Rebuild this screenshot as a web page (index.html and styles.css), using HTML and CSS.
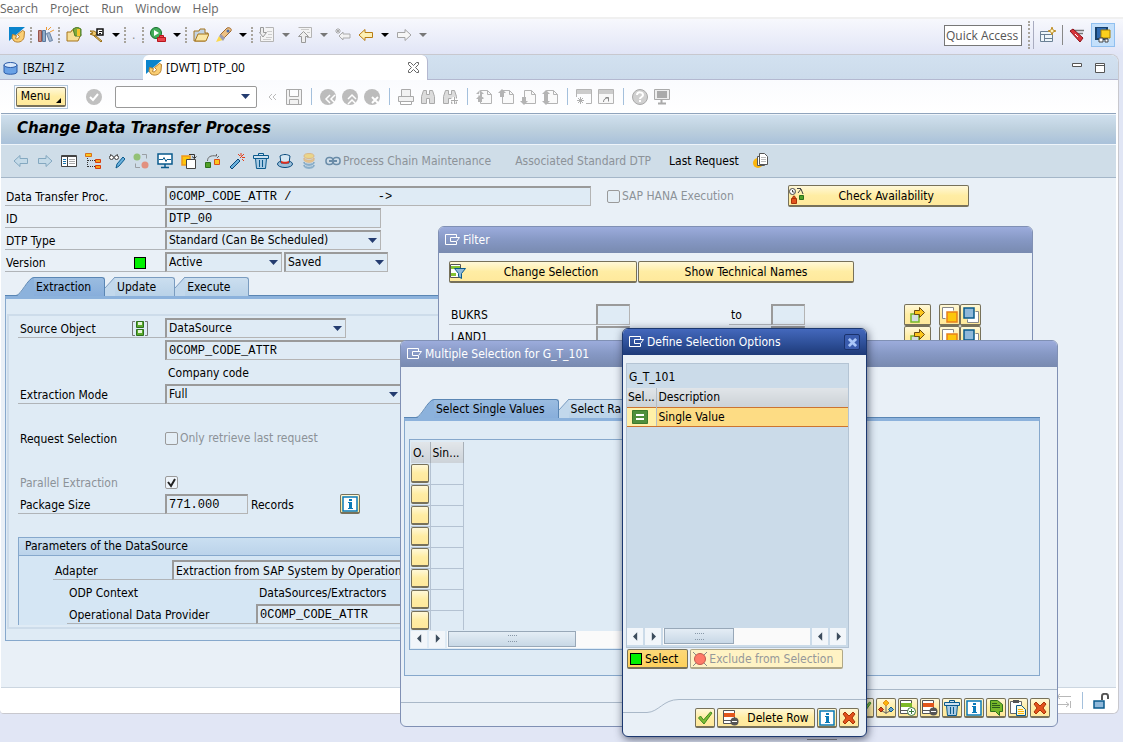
FILE: index.html
```html
<!DOCTYPE html>
<html lang="en">
<head>
  <meta charset="UTF-8">
  <meta name="viewport" content="width=device-width, initial-scale=1.0">
  <title>Change Data Transfer Process</title>
  <link rel="stylesheet" href="styles.css">
</head>
<body>
  <!-- Shared icons -->
  <svg class="sprite" aria-hidden="true">
    <symbol id="i-logo" viewBox="0 0 16 16"><path d="M0 0h16L0 14z" fill="#0a84cc"/><path d="M3.500 7.500l4 1-1 3c2 1 3 0 4-2l-2-2 5-4 2 1-.5 6c-1 4-6 6-10 3.500l-2-3z" fill="#fbcf74" stroke="#b8802c"/></symbol>
    <symbol id="i-window" viewBox="0 0 16 12"><path d="M11.500 3V.5H.5v10h11V8M5.500 3.500h9l-3 4h-6z" fill="none" stroke="currentColor"/></symbol>
    <symbol id="i-folder" viewBox="0 0 16 16"><path d="M1 14V4h5l1-2h5v4h3l-3 8z" fill="#c4d4e4" stroke="#a5741c"/><path d="M2 14l3-7h11l-3 7z" fill="#fbe7a6" stroke="#a5741c"/></symbol>
    <symbol id="i-caret" viewBox="0 0 8 16"><path d="M0 6h8L4 10z" fill="currentColor"/></symbol>
    <symbol id="i-left" viewBox="0 0 16 16"><path d="M1 8l6-5.500v3h7.500v5H7v3z" fill="var(--fill)" stroke="currentColor"/></symbol>
    <symbol id="i-right" viewBox="0 0 16 16"><path d="M15 8L9 2.500v3H1.500v5H9v3z" fill="var(--fill)" stroke="currentColor"/></symbol>
    <symbol id="i-trash" viewBox="0 0 16 16"><path d="M2.500 5.500h11l-1 10h-9z" fill="#a9cbe4" stroke="#0a5a8c"/><path d="M6.500 7v7M9.500 7v7" stroke="#0a5a8c"/><path d="M.5 2.500h15v3H.5zM5.500 2.500v-2h5v2" fill="#cfe2f0" stroke="#0a5a8c"/></symbol>
    <symbol id="i-info" viewBox="0 0 16 16"><path d="M1 1h14v14H1z" fill="#fff" stroke="#0a7ab8" stroke-width="1.500"/><path d="M7 3h3v2H7zM6 6h4v6h1v1H6v-1h1V7H6z" fill="#0a7ab8"/></symbol>
    <symbol id="i-cross" viewBox="0 0 16 16"><path d="M2 4l2-2 4 4 4-4 2 2-3 4 3 4-2 2-4-4-4 4-2-2 3-4z" fill="#e2521c" stroke="#a83408"/></symbol>
    <symbol id="i-check" viewBox="0 0 16 16"><path d="M1.500 8l2-2 3 4 7-8 1.500 1-8 11z" fill="#7dbb35" stroke="#3d8a1f"/></symbol>
    <symbol id="i-addrow" viewBox="0 0 16 16"><path d="M.5.5h11v13H.5z" fill="#fff" stroke="#555"/><path d="M1 3h11v4H1z" fill="#7db928"/><path d="M1 10.500h9" stroke="#555"/><circle cx="11.500" cy="11.500" r="4" fill="#fff" stroke="#3c7a3c"/><path d="M9 11.500h5M11.500 9v5" stroke="#3c7a3c"/></symbol>
    <symbol id="i-delrow" viewBox="0 0 16 16"><path d="M.5.5h11v13H.5z" fill="#fff" stroke="#555"/><path d="M1 3h11v4H1z" fill="#e2571c"/><path d="M1 10.500h9" stroke="#555"/><circle cx="11.500" cy="11.500" r="4" fill="#555"/><path d="M9 11.500h5" stroke="#fff"/></symbol>
    <symbol id="i-arrow" viewBox="0 0 16 16"><path d="M1 7h8v8H1z" fill="#d5dde0" stroke="#76b82a" stroke-width="1.500"/><path d="M4.500 3.500h5v-3l5 5-5 5v-3h-5z" fill="#fbc51c" stroke="#6c4c14"/></symbol>
    <symbol id="i-copyin" viewBox="0 0 16 16"><path d="M11.500 3.500v-3H.5v11h3" fill="#fff" stroke="#888"/><path d="M5 5h10v10H5z" fill="#fdc60c" stroke="#e8801c" stroke-width="1.500"/></symbol>
    <symbol id="i-copyout" viewBox="0 0 16 16"><path d="M12.500 4.500h3v11h-11v-3" fill="#fff" stroke="#888"/><path d="M1 1h10v10H1z" fill="#8fb8da" stroke="#0a5a8c" stroke-width="1.500"/></symbol>
    <symbol id="i-page" viewBox="0 0 16 16"><path d="M4.500 1.500h7l4 4v9h-11z" fill="#fafafa" stroke="#b4b4b4"/><path d="M11.500 1.500v4h4" fill="none" stroke="#b4b4b4"/></symbol>
    <symbol id="i-bin" viewBox="0 0 16 16"><path d="M1.500 7.500l2-6h3v4h3v-4h3l2 6v7h-5v-5h-3v5h-5z" fill="#dcdcdc" stroke="#aaa"/></symbol>
  </svg>

  <nav class="menubar">
    <a href="#">Search</a><a href="#">Project</a><a href="#">Run</a><a href="#">Window</a><a href="#">Help</a>
  </nav>

  <header class="toolbar">
    <div class="tools first"><svg class="icon"><use href="#i-logo"/></svg></div>
    <div class="tools"><svg class="icon" viewBox="0 0 16 16"><path d="M.5 3.500h3v11h-3z" fill="#c48a80" stroke="#98544c"/><path d="M4.500 3.500h3v11h-3z" fill="#8fabc8" stroke="#58779c"/><path d="M8.500 6.500l3-1 3 8-3 1z" fill="#a3b8d0" stroke="#6882a4"/><path d="M10 3l3-3M12 5l4-2M8.500 3V0" stroke="#ec9a34"/></svg></div>
    <div class="tools">
      <svg class="icon" viewBox="0 0 16 16"><path d="M1 14V5h4l1-2h4v4h5l-3 7z" fill="#f7df98" stroke="#a5741c"/><path d="M7 2l4-2 4 2v7H9z" fill="#7ea83a" stroke="#4d7a26"/><path d="M11 2h3v7h-3z" fill="#f5c42c"/></svg>
      <svg class="icon" viewBox="0 0 16 16"><path d="M1 4h4l3 2-2 3-5-2 3-1zM7 9l6 5-1 1-7-6z" fill="#f0c86c" stroke="#99701c"/><path d="M8 2h6v6H8z" fill="#fff" stroke="#111" stroke-width="1.500"/><path d="M10 4.500h3M10 6.500h2" stroke="#111"/></svg>
      <svg class="caret"><use href="#i-caret"/></svg>
    </div>
    <div class="tools"><span class="dot">.</span></div>
    <div class="tools">
      <svg class="icon" viewBox="0 0 16 16"><circle cx="6" cy="6" r="5.500" fill="#43ac5a" stroke="#16702c"/><path d="M4 3l5 3-5 3z" fill="#fff"/><path d="M7.500 10.500h8v4h-8zM9.500 10.500v-2h4v2" fill="#e8444c" stroke="#b8141c"/></svg>
      <svg class="caret"><use href="#i-caret"/></svg>
    </div>
    <div class="tools">
      <svg class="icon"><use href="#i-folder"/></svg>
      <svg class="icon" viewBox="0 0 16 16"><path d="M0 15l3-6 4 4z" fill="#fcd94c"/><path d="M4 8l7-7c3-1 5 1 4 3l-7 7z" fill="#edc184" stroke="#a06a30"/><circle cx="12" cy="4" r="1.500" fill="#4e6da8"/><path d="M3 9l2-2 4 4-2 3z" fill="#9c9cb0"/></svg>
      <svg class="caret"><use href="#i-caret"/></svg>
    </div>
    <div class="tools grey">
      <svg class="icon" viewBox="0 0 16 16"><path d="M6.500.5h8v14H1.500V9" fill="#f4f4f4" stroke="#b4b4b4"/><path d="M1.500.5h3v5h3L4 10 .5 5.500h1z" fill="#eee" stroke="#999"/><path d="M8 4.500h5M9 7.500h4M7 10.500h6M4 12.500h8" stroke="#ccc"/></svg>
      <svg class="caret"><use href="#i-caret"/></svg>
      <svg class="icon" viewBox="0 0 16 16"><path d="M1.500.5h13v10H10" fill="#f4f4f4" stroke="#b4b4b4"/><path d="M4.500 15.500v-6h-3l5-5 5 5h-3v6z" fill="#eee" stroke="#999"/><path d="M4 2.500h8M10 5.500h3" stroke="#ccc"/></svg>
      <svg class="caret"><use href="#i-caret"/></svg>
      <svg class="icon" viewBox="0 0 16 16"><path d="M4 9l4-4v2h7v4H8v2z" fill="#f2f2f2" stroke="#aaa"/><path d="M3 1v6M0 4h6M1 2l4 4M5 2L1 6" stroke="#aaa"/></svg>
      <svg class="icon arrow-gold"><use href="#i-left"/></svg>
      <svg class="caret black"><use href="#i-caret"/></svg>
      <svg class="icon arrow-grey"><use href="#i-right"/></svg>
      <svg class="caret"><use href="#i-caret"/></svg>
    </div>
    <div class="perspectives">
      <input class="quick" type="text" aria-label="Quick Access" value="Quick Access">
      <span class="grip"></span>
      <svg class="icon" viewBox="0 0 16 16"><path d="M.5 4.500h12v10H.5zM.5 7.500h12M4.500 7.500v7M4.500 11.500h8" fill="#eef6fb" stroke="#6a8094"/><path d="M12 0l1 3 3 1-3 1-1 3-1-3-3-1 3-1z" fill="#fff4c0" stroke="#c0902c"/></svg>
      <span class="bar"></span>
      <svg class="icon" viewBox="0 0 16 16"><path d="M3 3.500h12M5 6.500h9" stroke="#777" stroke-width="1.500"/><path d="M1 4l3-2 10 9-3 4z" fill="#d8343c" stroke="#8c1018"/><path d="M6 7l3 3" stroke="#fff"/></svg>
      <button class="active-persp" aria-label="SAP GUI"><svg class="icon" viewBox="0 0 16 16"><path d="M1 0h11v12H1z" fill="#2c68b0" stroke="#16406c" stroke-width="2"/><path d="M6 3h9v8H6z" fill="#fcd01c" stroke="#a88008"/><path d="M4 11h4v4H4zM10 12h3v3h-3z" fill="#fff" stroke="#444"/></svg></button>
    </div>
  </header>

  <main class="editor">
    <div class="editor-tabs">
      <button class="etab"><svg class="icon" viewBox="0 0 16 16"><path d="M1 5v7c0 3 13 3 13 0V5z" fill="#6aa2e6" stroke="#2c5ca8"/><ellipse cx="7.500" cy="5" rx="6.500" ry="2.500" fill="#d8e8fb" stroke="#2c5ca8"/></svg>[BZH] Z</button>
      <button class="etab current"><svg class="icon"><use href="#i-logo"/></svg>[DWT] DTP_00
        <svg class="close" viewBox="0 0 11 11"><path d="M.5.5h2l3 3 3-3h2v2l-3 3 3 3v2h-2l-3-3-3 3h-2v-2l3-3-3-3z" fill="#fff" stroke="#666"/></svg></button>
      <svg class="winctl" viewBox="0 0 36 12"><path d="M1.500 1.500h9v3h-9zM24.500 1.500h9v9h-9zM24.500 3.500h9" fill="#fff" stroke="#555"/></svg>
    </div>

    <div class="sysbar">
      <span class="menu-frame"><button class="sap-btn menu-btn">Menu<svg class="corner" viewBox="0 0 5 5"><path d="M5 0v5H0z"/></svg></button></span>
      <svg class="icon ok" viewBox="0 0 16 16"><circle cx="8" cy="8" r="8" fill="#c0c0c0"/><path d="M4 8l3 3 5-6" fill="none" stroke="#fff" stroke-width="2"/></svg>
      <select class="command" aria-label="Command"><option></option></select>
      <svg class="chev" viewBox="0 0 10 16"><path d="M5 5L2 8l3 3M9 5L6 8l3 3" fill="none" stroke="#bbb"/></svg>
      <svg class="icon" viewBox="0 0 16 16"><path d="M.5.5h15v15H.5zM3.500.5v7h9v-7M3.500 15.500v-5h9v5" fill="#f2f2f2" stroke="#a8a8a8"/></svg>
      <span class="sep"></span>
      <svg class="icon" viewBox="0 0 16 16"><circle cx="8" cy="8" r="8" fill="#bcbcbc"/><path d="M10 6l-4 4 4 4M15 6l-4 4 4 4" fill="none" stroke="#fff" stroke-width="1.500"/></svg>
      <svg class="icon" viewBox="0 0 16 16"><circle cx="8" cy="8" r="8" fill="#bcbcbc"/><path d="M6 10l4-4 4 4M6 15l4-4 4 4" fill="none" stroke="#fff" stroke-width="1.500"/></svg>
      <svg class="icon" viewBox="0 0 16 16"><circle cx="8" cy="8" r="8" fill="#bcbcbc"/><path d="M8 8l6 6M14 8l-6 6" stroke="#fff" stroke-width="2"/></svg>
      <span class="sep"></span>
      <svg class="icon" viewBox="0 0 16 16"><path d="M3.500 7V.5h9V7M.5 7.500h15v5H.5z" fill="#f2f2f2" stroke="#aaa"/><path d="M2.500 12.500h11v3h-11z" fill="#fff" stroke="#aaa"/></svg>
      <svg class="icon"><use href="#i-bin"/></svg>
      <svg class="icon" viewBox="0 0 16 16"><use href="#i-bin"/><path d="M12 8v7M9 11h7" stroke="#fff" stroke-width="3"/><path d="M12.500 8v7M9 11.500h7" stroke="#aaa"/></svg>
      <span class="sep"></span>
      <svg class="icon" viewBox="0 0 16 16"><use href="#i-page"/><path d="M4 1l4 4H6v3h2l-4 0zM4 1L0 5h3v3H0l0 0h8L6 9v4H2V9zM4 6l4 4H0z" fill="#b4b4b4"/></svg>
      <svg class="icon" viewBox="0 0 16 16"><use href="#i-page"/><path d="M4 0l4 4H6v4H2V4H0z" fill="#b4b4b4"/></svg>
      <svg class="icon" viewBox="0 0 16 16"><use href="#i-page"/><path d="M4 16l4-4H6V8H2v4H0z" fill="#b4b4b4"/></svg>
      <svg class="icon" viewBox="0 0 16 16"><use href="#i-page"/><path d="M4 16l4-4H6V5h2L4 1 0 5h2v7H0z" fill="#b4b4b4"/></svg>
      <span class="sep"></span>
      <svg class="icon" viewBox="0 0 16 16"><path d="M.5 8V.5h15v14H10" fill="none" stroke="#b4b4b4"/><path d="M1 1h14v4H1z" fill="#ccc"/><path d="M4.500 8v7M1 11.500h7M2 9l5 5M7 9l-5 5" stroke="#b0b0b0"/></svg>
      <svg class="icon" viewBox="0 0 16 16"><path d="M.5.5h15v14H.5z" fill="#f8f8f8" stroke="#b4b4b4"/><path d="M1 1h14v4H1z" fill="#ccc"/><path d="M5.500 13c0-3 2-4 5-4M7.500 8.500h3v4" fill="none" stroke="#888"/></svg>
      <span class="sep"></span>
      <svg class="icon" viewBox="0 0 16 16"><circle cx="8" cy="8" r="7.500" fill="#d0d0d0" stroke="#a8a8a8"/><path d="M5 6c0-4 6-3 6 0 0 2-3 2-3 4M8 11v2" fill="none" stroke="#fff" stroke-width="2"/></svg>
      <svg class="icon" viewBox="0 0 16 16"><path d="M.5.5h15v10H.5z" fill="#eee" stroke="#aaa"/><path d="M3 2h10v7H3z" fill="#aaa"/><path d="M7.500 10v4M4 14.500h8" stroke="#aaa" stroke-width="2"/></svg>
    </div>

    <div class="session">
      <h1 class="title">Change Data Transfer Process</h1>
      <div class="appbar">
        <svg class="icon arrow-blue"><use href="#i-left"/></svg>
        <svg class="icon arrow-blue"><use href="#i-right"/></svg>
        <svg class="icon" viewBox="0 0 16 16"><path d="M.5 2.500h15v11H.5z" fill="#fff" stroke="#444"/><path d="M1 3.500h14M6.500 4v9" stroke="#444"/><path d="M2 6.500h3M2 8.500h3M2 10.500h3" stroke="#1c74ac"/><path d="M8 6.500h6M8 8.500h6M8 10.500h6" stroke="#aaa"/></svg>
        <svg class="icon" viewBox="0 0 16 16"><path d="M.5.5h6v3h-6z" fill="#fbc51c" stroke="#d8701c"/><path d="M2.500 5v9M3 7.500h7M3 13.500h7" stroke="#333" stroke-dasharray="1 1"/><path d="M10.500 6.500h5v3h-5zM10.500 12.500h5v3h-5z" fill="#f7a01c" stroke="#d83c0c"/></svg>
        <svg class="icon" viewBox="0 0 16 16"><path d="M2 1L1 4M8 1l1 3" stroke="#444"/><circle cx="2.500" cy="4.500" r="2" fill="#fff" stroke="#444"/><circle cx="7.500" cy="4.500" r="2" fill="#fff" stroke="#444"/><path d="M7 15l1-4 6-7 2 2-6 7z" fill="#6ab0dc" stroke="#0a5a8c"/></svg>
        <svg class="icon faded" viewBox="0 0 16 16"><circle cx="4" cy="4" r="3.500" fill="#6cb02c"/><circle cx="12" cy="12" r="3.500" fill="#f0603c"/><path d="M9 1.500h4.500v4M7 14.500H2.500v-4" fill="none" stroke="#777"/></svg>
        <svg class="icon" viewBox="0 0 16 16"><path d="M1 1h14v10H1z" fill="#fff" stroke="#0a5a8c" stroke-width="1.500"/><path d="M2 6.500h4l1-2 2 4 1-2h4" fill="none" stroke="#0a5a8c"/><path d="M8 11v3M4 14.500h8" stroke="#0a5a8c" stroke-width="1.500"/></svg>
        <svg class="icon" viewBox="0 0 16 16"><path d="M1 3h8v9H1z" fill="#fdc60c" stroke="#f0981c" stroke-width="1.500"/><path d="M5.500 6.500h9v9h-9z" fill="#fff" stroke="#444"/><path d="M8 1.500h5.500v4M11 3.500l2.500 2 2-2" fill="none" stroke="#333"/></svg>
        <svg class="icon" viewBox="0 0 16 16"><path d="M.5 9.500h5v5h-5z" fill="#50a028" stroke="#2c701c"/><path d="M9.500 6.500h5v5h-5z" fill="#fbc51c" stroke="#d8501c"/><path d="M2.500 8c0-4 3-6 9-5V1M12 5l2-2" fill="none" stroke="#666"/></svg>
        <svg class="icon" viewBox="0 0 16 16"><path d="M1 14l8-8 2 2-8 8z" fill="#6ab0dc" stroke="#0a4a7c"/><path d="M12 0v3M16 4.500h-3M15 1l-4 4M9 1l2 2M15 8l-2-2" stroke="#e2401c"/></svg>
        <svg class="icon"><use href="#i-trash"/></svg>
        <svg class="icon" viewBox="0 0 16 16"><ellipse cx="8" cy="11" rx="7.500" ry="3.500" fill="#9cc0da" stroke="#0a4a7c"/><path d="M4 10L3 3c3-2 7-2 10 0l-1 7z" fill="#d5e6f2" stroke="#0a4a7c"/><path d="M4 8c2 1 6 1 8 0v2c-2 1-6 1-8 0z" fill="#e02c1c"/></svg>
        <svg class="icon faded" viewBox="0 0 16 16"><ellipse cx="8" cy="3" rx="5" ry="2.500" fill="#fcd04c" stroke="#e2a04c"/><path d="M3 5c0 3 10 3 10 0v2c0 3-10 3-10 0z" fill="#fbb54c" stroke="#e2a04c"/><path d="M3 9c0 3 10 3 10 0v1c0 3-10 3-10 0zM3 12c0 3 10 3 10 0v1c0 3-10 3-10 0z" fill="#8ab4d4" stroke="#4c84ac"/></svg>
        <button class="link-btn chain" disabled><svg class="icon" viewBox="0 0 16 16"><rect x="1" y="4.500" width="7" height="7" rx="3" fill="none" stroke="#6a8ca8" stroke-width="1.500"/><rect x="8" y="4.500" width="7" height="7" rx="3" fill="none" stroke="#6a8ca8" stroke-width="1.500"/><path d="M4 8h8" stroke="#6a8ca8" stroke-width="2"/></svg>Process Chain Maintenance</button>
        <button class="link-btn assoc" disabled>Associated Standard DTP</button>
        <button class="link-btn last">Last Request</button>
        <svg class="icon" viewBox="0 0 16 16"><circle cx="5" cy="10" r="5" fill="#fbb50c"/><path d="M4.500 3.500h7v9h-7z" fill="#fff" stroke="#555"/><path d="M6.500.5h5l3 3v8h-8z" fill="#fff" stroke="#555"/><path d="M8 4.500h5M8 6.500h5M8 8.500h5" stroke="#bbb"/></svg>
      </div>

      <div class="screen">
        <div class="row">
          <label class="lbl wide" for="dtp">Data Transfer Proc.</label>
          <input class="field mono w-proc" id="dtp" value="0COMP_CODE_ATTR /            -&gt;" readonly>
          <label class="check hana"><input type="checkbox" disabled>SAP HANA Execution</label>
          <button class="sap-btn availability"><svg class="icon" viewBox="0 0 16 16"><circle cx="3.500" cy="3.500" r="3" fill="#fff" stroke="#444"/><path d="M3.500 2v2h2M8 .5h4M9 5l3-4 2 5" fill="none" stroke="#444"/><path d="M10.500 7.500h4v4h-4z" fill="#50a028" stroke="#2c701c"/><path d="M2.500 10.500h5v5h-5zM3.500 10l1-2h1l1 2" fill="#e2521c" stroke="#a83408"/></svg><span>Check Availability</span></button>
        </div>
        <div class="row">
          <label class="lbl wide" for="dtpid">ID</label>
          <input class="field mono w-id" id="dtpid" value="DTP_00" readonly>
        </div>
        <div class="row">
          <label class="lbl wide" for="dtptype">DTP Type</label>
          <select class="field w-id" id="dtptype"><option>Standard (Can Be Scheduled)</option></select>
        </div>
        <div class="row">
          <label class="lbl wide" for="version">Version <span class="led"></span></label>
          <select class="field w-version" id="version"><option>Active</option></select>
          <select class="field w-state" aria-label="State"><option>Saved</option></select>
        </div>

        <div class="tabs">
          <svg class="slope" viewBox="0 0 18 19"><path d="M0 19C6 18 12 1 18 0V19z" fill="#8cb2dc"/><path d="M0 18.500c5 0 12-18 18-18" fill="none" stroke="#5a86b4"/></svg>
          <button class="tab on">Extraction</button>
          <svg class="slope small" viewBox="0 0 10 19"><path d="M0 11L10 0v19H0z" fill="#c2d8ec"/><path d="M0 11L10 0" stroke="#7a9cc0"/></svg>
          <button class="tab">Update</button>
          <svg class="slope small" viewBox="0 0 10 19"><path d="M0 11L10 0v19H0z" fill="#c2d8ec"/><path d="M0 11L10 0" stroke="#7a9cc0"/></svg>
          <button class="tab">Execute</button>
        </div>
        <section class="panel">
          <div class="group">
            <div class="row">
              <label class="lbl" for="source">Source Object <svg class="icon" viewBox="0 0 16 16"><path d="M3 .5H.5v14H3M13 .5h2.500v14H13" fill="none" stroke="#777"/><path d="M4.500.5h7v6h-7zM4.500 8.500h7v6h-7z" fill="#5aa82c" stroke="#2c701c"/><path d="M6 1h4v3H6zM6 9h4v3H6z" fill="#e4f4d8"/></svg></label>
              <select class="field w-source" id="source"><option>DataSource</option></select>
            </div>
            <div class="row indent"><input class="field mono w-name" aria-label="DataSource name" value="0COMP_CODE_ATTR" readonly></div>
            <div class="row indent"><span class="value">Company code</span></div>
            <div class="row">
              <label class="lbl" for="mode">Extraction Mode</label>
              <select class="field w-mode" id="mode"><option>Full</option></select>
            </div>
            <div class="row"></div>
            <div class="row">
              <span class="lbl plain">Request Selection</span>
              <label class="check"><input type="checkbox" disabled>Only retrieve last request</label>
            </div>
            <div class="row"></div>
            <div class="row">
              <label class="lbl plain dim" for="parallel">Parallel Extraction</label>
              <span class="check"><input type="checkbox" id="parallel" checked></span>
            </div>
            <div class="row">
              <label class="lbl" for="package">Package Size</label>
              <input class="field mono w-package" id="package" value="771.000" readonly>
              <span class="records">Records</span>
              <button class="sap-btn sq" aria-label="Information"><svg class="icon"><use href="#i-info"/></svg></button>
            </div>
            <fieldset class="params">
              <legend>Parameters of the DataSource</legend>
              <div class="row adapter"><label class="lbl" for="adapter">Adapter</label><input class="field w-rest" id="adapter" value="Extraction from SAP System by Operational Data Provisioning" readonly></div>
              <div class="row odp"><span class="lbl plain">ODP Context</span><span class="value">DataSources/Extractors</span></div>
              <div class="row odp"><label class="lbl" for="odp">Operational Data Provider</label><input class="field mono w-rest" id="odp" value="0COMP_CODE_ATTR" readonly></div>
            </fieldset>
          </div>
        </section>
      </div>
      <footer class="status">
        <svg class="icon" viewBox="0 0 16 16"><path d="M.5 0v7M2 3.500h14M5 1L2 3.500 5 6M15.500 8v7M0 11.500h14M11 9l3 2.500-3 2.500" fill="none" stroke="#b8b8b8"/></svg>
        <span class="sep"></span>
        <svg class="icon" viewBox="0 0 16 16"><path d="M1 8h10v7H1z" fill="#8fb8da" stroke="#0a5a8c" stroke-width="1.500"/><path d="M9 7V3c0-3 6-3 6 0v3" fill="none" stroke="#555" stroke-width="2"/></svg>
      </footer>
    </div>
  </main>

  <footer class="workbench-foot"><span class="foot-line"></span></footer>

  <!-- Filter window -->
  <section class="dialog filter">
    <h2 class="dlg-title"><svg class="win-icon"><use href="#i-window"/></svg>Filter</h2>
    <div class="filter-btns">
      <button class="sap-btn change"><svg class="icon" viewBox="0 0 16 16"><path d="M.5.5h10v13H.5z" fill="#fff" stroke="#555"/><path d="M1 2h9v3H1zM1 9h5v3H1z" fill="#86c232"/><path d="M4.500 4.500h11l-4 5v5l-3-2v-3z" fill="#8fb8da" stroke="#0a5a8c"/></svg><span>Change Selection</span></button>
      <button class="sap-btn names">Show Technical Names</button>
    </div>
    <div class="range">
      <label class="lbl" for="bukrs">BUKRS</label><input class="field" id="bukrs">
      <label class="lbl to" for="bukrs2">to</label><input class="field" id="bukrs2">
      <button class="sap-btn multi" aria-label="Multiple selection"><svg class="icon"><use href="#i-arrow"/></svg></button>
      <button class="sap-btn in" aria-label="Include"><svg class="icon"><use href="#i-copyin"/></svg></button>
      <button class="sap-btn" aria-label="Exclude"><svg class="icon"><use href="#i-copyout"/></svg></button>
    </div>
    <div class="range">
      <label class="lbl" for="land">LAND1</label><input class="field" id="land">
      <span class="lbl to"></span><input class="field" aria-label="LAND1 to">
      <button class="sap-btn multi" aria-label="Multiple selection"><svg class="icon"><use href="#i-arrow"/></svg></button>
      <button class="sap-btn in" aria-label="Include"><svg class="icon"><use href="#i-copyin"/></svg></button>
      <button class="sap-btn" aria-label="Exclude"><svg class="icon"><use href="#i-copyout"/></svg></button>
    </div>
  </section>

  <!-- Multiple selection window -->
  <section class="dialog multiple">
    <h2 class="dlg-title"><svg class="win-icon"><use href="#i-window"/></svg>Multiple Selection for G_T_101</h2>
    <div class="multi-body">
      <div class="tabs">
        <svg class="slope" viewBox="0 0 18 19"><path d="M0 19C6 18 12 1 18 0V19z" fill="#8cb2dc"/><path d="M0 18.500c5 0 12-18 18-18" fill="none" stroke="#5a86b4"/></svg>
        <button class="tab on">Select Single Values</button>
        <svg class="slope small" viewBox="0 0 10 19"><path d="M0 11L10 0v19H0z" fill="#c2d8ec"/><path d="M0 11L10 0" stroke="#7a9cc0"/></svg>
        <button class="tab">Select Ra</button>
      </div>
      <div class="panel">
        <div class="grid-frame">
          <table class="values">
            <thead><tr><th>O.</th><th>Sin...</th></tr></thead>
            <tbody>
              <tr><td><button class="sap-btn cell" aria-label="Option 1"></button></td><td></td></tr>
              <tr><td><button class="sap-btn cell" aria-label="Option 2"></button></td><td></td></tr>
              <tr><td><button class="sap-btn cell" aria-label="Option 3"></button></td><td></td></tr>
              <tr><td><button class="sap-btn cell" aria-label="Option 4"></button></td><td></td></tr>
              <tr><td><button class="sap-btn cell" aria-label="Option 5"></button></td><td></td></tr>
              <tr><td><button class="sap-btn cell" aria-label="Option 6"></button></td><td></td></tr>
              <tr><td><button class="sap-btn cell" aria-label="Option 7"></button></td><td></td></tr>
              <tr><td><button class="sap-btn cell" aria-label="Option 8"></button></td><td></td></tr>
            </tbody>
          </table>
          <div class="scroll">
            <button aria-label="Scroll left"><svg viewBox="0 0 6 10"><path d="M5 0v10L0 5z"/></svg></button>
            <button aria-label="Scroll right"><svg viewBox="0 0 6 10"><path d="M1 0v10l5-5z"/></svg></button>
            <span class="track"><span class="thumb long"></span></span>
          </div>
        </div>
      </div>
    </div>
    <div class="edge"><span class="low"></span><svg viewBox="0 0 32 14"><path d="M0 13.500C12 13 16 .5 32 .5" fill="none" stroke="#a9b8c8"/></svg><span class="high"></span></div>
    <div class="dlg-foot">
      <button class="sap-btn sq" aria-label="Copy"><svg class="icon"><use href="#i-check"/></svg></button>
      <button class="sap-btn sq" aria-label="Selection options"><svg class="icon" viewBox="0 0 16 16"><path d="M8 5v9M4 11l4 2 4-2" fill="none" stroke="#666"/><path d="M8 0l3 3-3 3-3-3z" fill="#fbb50c" stroke="#e2901c"/><path d="M3 7l2.500 2.500L3 12 .5 9.500z" fill="#d8441c" stroke="#902c0c"/><path d="M13 7l2.500 2.500L13 12l-2.500-2.500z" fill="#6aa4cc" stroke="#0a5a8c"/></svg></button>
      <button class="sap-btn sq" aria-label="Insert row"><svg class="icon"><use href="#i-addrow"/></svg></button>
      <button class="sap-btn sq" aria-label="Delete row"><svg class="icon"><use href="#i-delrow"/></svg></button>
      <button class="sap-btn sq" aria-label="Delete all"><svg class="icon"><use href="#i-trash"/></svg></button>
      <button class="sap-btn sq" aria-label="Help"><svg class="icon"><use href="#i-info"/></svg></button>
      <button class="sap-btn sq" aria-label="Import from text file"><svg class="icon" viewBox="0 0 16 16"><path d="M2.500.5h7l5 4v7h-3v4l-4-4h-5z" fill="#76b82a" stroke="#2c701c"/><path d="M4 3.500h5M4 5.500h8M4 7.500h8" stroke="#2c5c1c"/></svg></button>
      <button class="sap-btn sq" aria-label="Paste"><svg class="icon" viewBox="0 0 16 16"><path d="M.5 1.500h11v12H.5z" fill="#fff" stroke="#666"/><path d="M3 0h6v3H3z" fill="#555"/><path d="M6.500 5.500h5l4 4v6h-9z" fill="#fff8d0" stroke="#0a5a8c"/><path d="M8 9.500h5M8 11.500h6M8 13.500h6" stroke="#fbb50c"/></svg></button>
      <button class="sap-btn sq" aria-label="Cancel"><svg class="icon"><use href="#i-cross"/></svg></button>
    </div>
  </section>

  <!-- Define selection options window -->
  <section class="dialog define">
    <h2 class="dlg-title"><svg class="win-icon"><use href="#i-window"/></svg>Define Selection Options
      <button class="dlg-close" aria-label="Close"><svg viewBox="0 0 10 10"><path d="M1 1l8 8M9 1L1 9" stroke="#a9c6f8" stroke-width="3"/></svg></button></h2>
    <div class="options">
      <table>
        <caption>G_T_101</caption>
        <thead><tr><th class="sel">Sel...</th><th>Description</th></tr></thead>
        <tbody><tr class="picked"><td class="sel"><svg class="icon" viewBox="0 0 16 14"><path d="M.5.500h15v13H.5z" fill="#4f8f3c" stroke="#3c7a2c"/><path d="M4 4h8v2H4zM4 8h8v2H4z" fill="#fff"/></svg></td><td>Single Value</td></tr></tbody>
      </table>
      <div class="scroll">
        <button aria-label="Scroll left"><svg viewBox="0 0 6 10"><path d="M5 0v10L0 5z"/></svg></button>
        <button aria-label="Scroll right"><svg viewBox="0 0 6 10"><path d="M1 0v10l5-5z"/></svg></button>
        <span class="track"><span class="thumb"></span></span>
        <button aria-label="Page left"><svg viewBox="0 0 6 10"><path d="M5 0v10L0 5z"/></svg></button>
        <button aria-label="Page right"><svg viewBox="0 0 6 10"><path d="M1 0v10l5-5z"/></svg></button>
      </div>
    </div>
    <div class="choice">
      <button class="sap-btn chosen"><span class="led"></span>Select</button>
      <button class="sap-btn exclude" disabled><svg class="icon" viewBox="0 0 16 16"><path d="M1 1l14 14M15 1L1 15" stroke="#888"/><circle cx="8" cy="8" r="5.500" fill="#ff7a68" stroke="#c05a4c"/></svg>Exclude from Selection</button>
    </div>
    <div class="edge"><span class="low"></span><svg viewBox="0 0 32 14"><path d="M0 13.500C12 13 16 .5 32 .5" fill="none" stroke="#a9b8c8"/></svg><span class="high"></span></div>
    <div class="dlg-foot">
      <button class="sap-btn sq" aria-label="Continue"><svg class="icon"><use href="#i-check"/></svg></button>
      <button class="sap-btn delete"><svg class="icon"><use href="#i-delrow"/></svg>Delete Row</button>
      <button class="sap-btn sq" aria-label="Help"><svg class="icon"><use href="#i-info"/></svg></button>
      <button class="sap-btn sq" aria-label="Cancel"><svg class="icon"><use href="#i-cross"/></svg></button>
    </div>
  </section>
</body>
</html>
```
FILE: styles.css
```css
* {
  box-sizing: border-box;
}

body {
  margin: 0;
  min-height: 100vh;
  display: flex;
  flex-direction: column;
  position: relative;
  overflow: hidden;
  background: #e1e6f5;
  color: #000;
  font-family: "DejaVu Sans Condensed", "DejaVu Sans", sans-serif;
  font-size: 12px;
  line-height: 16px;
}

button,
input,
select {
  font: inherit;
  color: inherit;
  margin: 0;
}

button {
  padding: 0;
  border: 0;
  background: none;
}

.sprite {
  position: absolute;
  width: 0;
  height: 0;
}

.icon {
  width: 16px;
  height: 16px;
  flex: none;
}

/* Workbench menu and toolbar */
.menubar {
  display: flex;
  gap: 12px;
  height: 19px;
  padding-top: 1px;
  background: #fff;
  border-bottom: 2px solid #f0f0f0;
  font-family: "Open Sans", sans-serif;
}

.menubar a {
  color: #666;
  text-decoration: none;
}

.toolbar {
  display: flex;
  align-items: center;
  height: 35px;
  padding: 0 0 3px 9px;
  background: linear-gradient(#f7f8fd, #e1e5f6);
}

.tools {
  display: flex;
  align-items: center;
  gap: 7px;
  padding: 0 4px 0 6px;
  border-left: 2px dotted #a8a49c;
}

.tools.first {
  padding: 0 5px 0 0;
  border: 0;
}

.dot {
  width: 6px;
  color: #888;
}

.caret {
  width: 8px;
  height: 16px;
}

.grey .caret {
  color: #777;
}

.grey .caret.black {
  color: #000;
}

.arrow-gold {
  color: #b87c14;
  --fill: #fdf0b4;
}

.arrow-grey {
  color: #a4a4a4;
  --fill: #f6f6f6;
}

.arrow-blue {
  color: #84a8c0;
  --fill: #c4dae8;
}

.perspectives {
  display: flex;
  align-items: center;
  gap: 6px;
  margin-left: auto;
  padding-right: 8px;
}

.quick {
  width: 78px;
  height: 21px;
  padding: 0 1px;
  border: 1px solid #777;
  background: #fff;
  color: #555;
  font-family: "Open Sans", sans-serif;
}

.grip {
  width: 6px;
  height: 28px;
  border-left: 2px dotted #a8a49c;
  border-right: 1px solid #a9acc0;
}

.bar {
  height: 20px;
  border-left: 1px solid #888;
}

.active-persp {
  display: flex;
  padding: 3px;
  border: 1px solid #90c0f0;
  background: #c4e0fb;
}

/* Editor area */
.editor {
  flex: 1;
  display: flex;
  flex-direction: column;
  margin-right: 4px;
  border: 1px solid #c8c8ce;
  border-left: 0;
  border-radius: 0 8px 6px 4px;
  background: #fff;
  overflow: hidden;
}

.editor-tabs {
  display: flex;
  height: 25px;
  background: linear-gradient(#d2e1f0, #ccdbeb);
  border-bottom: 1px solid #b4b8d0;
  font-family: "Open Sans", sans-serif;
}

.etab {
  display: flex;
  align-items: center;
  gap: 4px;
  width: 143px;
  height: 25px;
  padding: 0 3px;
}

.etab.current {
  width: 285px;
  padding-right: 8px;
  background: #fff;
  border-right: 1px solid #b4b8d0;
  border-radius: 6px 6px 0 0;
}

.etab .close {
  width: 11px;
  height: 11px;
  margin-left: auto;
}

.winctl {
  width: 36px;
  height: 12px;
  margin: 7px 11px 0 auto;
}

.sysbar {
  display: flex;
  align-items: center;
  gap: 6px;
  height: 33px;
  padding-left: 14px;
  background: linear-gradient(#fafbfe, #fff);
}

.menu-frame {
  padding: 1px;
  border: 1px solid #b4c8dc;
}

.sap-btn {
  display: flex;
  align-items: center;
  justify-content: center;
  height: 22px;
  border: 1px solid #77715a;
  border-bottom-width: 2px;
  border-radius: 2px;
  background: linear-gradient(#fff8d8, #ffeda4 50%, #ffe99c);
}

.sap-btn > span:not(.led) {
  flex: 1;
  text-align: center;
}

.sap-btn.sq {
  width: 20px;
  height: 20px;
}

.sap-btn.menu-btn {
  width: 50px;
  height: 20px;
  gap: 6px;
}

.corner {
  width: 5px;
  height: 5px;
  margin-top: 8px;
}

.ok {
  margin: 0 7px 0 12px;
}

.command {
  width: 142px;
  height: 22px;
  margin-right: 4px;
}

.chev {
  width: 10px;
  height: 16px;
  margin-right: 3px;
}

.sep {
  width: 1px;
  height: 17px;
  margin: 0 2px 0 3px;
  background: #a4c0dc;
}

/* SAP session */
.session {
  flex: 1;
  display: flex;
  flex-direction: column;
  margin: 0 2px 0 1px;
  border-top: 1px solid #90a4bc;
}

.title {
  margin: 0;
  height: 31px;
  padding-left: 16px;
  border: 1px solid #eef4fa;
  border-width: 1px 0;
  background: linear-gradient(#d0e0ee, #bdd0de 50%, #a9c1da);
  font-family: "DejaVu Sans", sans-serif;
  font-size: 15px;
  font-style: italic;
  line-height: 27px;
}

.appbar {
  display: flex;
  align-items: center;
  gap: 8px;
  height: 33px;
  padding-left: 12px;
  border-bottom: 1px solid #a4b6c8;
  background: #cfdde8;
}

.faded {
  opacity: 0.6;
}

.link-btn {
  display: flex;
  align-items: center;
  gap: 2px;
}

.link-btn:disabled {
  color: #8c9298;
}

.assoc {
  margin-left: 16px;
}

.last {
  margin: 0 6px 0 10px;
}

.screen {
  flex: 1;
  padding: 7px 90px 0 4px;
  background: #e9f0f7;
}

.row {
  display: flex;
  align-items: center;
  gap: 2px;
  height: 22px;
}

.lbl {
  display: flex;
  align-items: center;
  justify-content: space-between;
  flex: none;
  width: 147px;
  height: 20px;
  margin-right: -2px;
  padding: 2px 17px 0 2px;
  border-bottom: 1px solid #b0b4b8;
  white-space: nowrap;
}

.lbl.wide {
  width: 160px;
  padding: 2px 17px 0 1px;
}

.lbl.plain {
  border-color: transparent;
}

.dim {
  color: #8c9298;
}

.field,
.command {
  appearance: none;
  flex: none;
  border: 1px solid #b4b4b4;
  border-top: 2px solid #9a9a9a;
  border-left: 2px solid #9a9a9a;
  border-radius: 0;
  background-color: #dfebf5;
}

.field {
  height: 20px;
  padding: 0 2px;
}

.command {
  border: 1px solid #999;
  border-radius: 2px;
  background-color: #fff;
}

select.field,
.command {
  background-image: url('data:image/svg+xml,<svg xmlns="http://www.w3.org/2000/svg" width="9" height="5"><path d="M0 0h9L4.500 5z" fill="%23243c70"/></svg>');
  background-repeat: no-repeat;
  background-position: right 3px center;
}

select.field {
  padding-bottom: 2px;
}

.command {
  background-position: right 6px center;
}

.mono {
  font-family: "Liberation Mono", monospace;
  white-space: pre;
}

.w-proc {
  width: 426px;
}

.w-id {
  width: 216px;
}

.w-version {
  width: 117px;
}

.w-state {
  width: 104px;
}

.w-source {
  width: 181px;
}

.w-name {
  width: 400px;
}

.w-mode {
  width: 237px;
}

.w-package {
  width: 83px;
}

.w-rest {
  flex: 1;
}

.check {
  display: flex;
  align-items: center;
  gap: 2px;
  color: #8c9298;
}

.check input {
  appearance: none;
  width: 13px;
  height: 13px;
  border: 1px solid #9a9a9a;
  border-radius: 2px;
  background: #e4eef6;
}

.check input:checked {
  background: #eef4fa url('data:image/svg+xml,<svg xmlns="http://www.w3.org/2000/svg" width="11" height="11"><path d="M2 5l3 4 4-7" fill="none" stroke="%23222" stroke-width="2"/></svg>');
}

.hana {
  margin-left: 14px;
}

.availability {
  width: 181px;
  margin-left: 52px;
}

.led {
  flex: none;
  width: 12px;
  height: 12px;
  margin-right: 2px;
  border: 1px solid #000;
  background: #00f000;
}

.tabs {
  display: flex;
  height: 20px;
  margin-top: 3px;
  padding-left: 12px;
}

.screen .tabs {
  padding-left: 11px;
}

.slope {
  width: 18px;
  height: 19px;
  margin-top: 1px;
}

.slope.small {
  width: 10px;
}

.tab {
  height: 19px;
  margin-top: 1px;
  padding: 0 18px 0 2px;
  border: 1px solid #7a9cc0;
  border-width: 1px 1px 0 0;
  border-radius: 0 3px 0 0;
  background: linear-gradient(#cbdeef, #b9d2e8);
}

.tab.on {
  padding-right: 13px;
  border-color: #5a86b4;
  background: linear-gradient(#9abce0, #88aedb);
}

.panel {
  padding: 15px 2px 11px 1px;
  border: 1px solid #86a8cc;
  border-top: 3px solid #8cb2dc;
  background: #dfebf5;
  box-shadow: 0 -1px #5a86b4;
}

.group {
  padding: 1px 0 2px 9px;
  border: 2px solid #cddcea;
}

.indent {
  padding-left: 147px;
}

.value {
  padding: 2px 0 0 3px;
}

.records {
  width: 88px;
  padding: 1px 0 0 1px;
}

.params {
  margin: 22px 0 0;
  padding: 3px 0 0;
  border: 1px solid #86a8cc;
  border-width: 1px 0 0 1px;
  background: #d5e6f4;
}

.params legend {
  float: left;
  width: 100%;
  height: 18px;
  margin: -3px 0 3px;
  padding: 0 6px;
  border-bottom: 1px solid #86a8cc;
  background: linear-gradient(#cadff1, #bbd3ea);
}

.params .row {
  clear: both;
}

.adapter {
  padding-left: 34px;
}

.adapter .lbl {
  width: 119px;
}

.odp {
  padding-left: 48px;
}

.odp .lbl {
  width: 189px;
}

.status {
  display: flex;
  justify-content: flex-end;
  align-items: center;
  gap: 8px;
  height: 26px;
  padding-right: 7px;
  border-top: 1px solid #ccd6e0;
  background: #fff;
}

.workbench-foot {
  display: flex;
  align-items: flex-end;
  justify-content: center;
  height: 28px;
  padding: 0 0 2px 521px;
}

.foot-line {
  width: 30px;
  border-bottom: 1px solid #888;
}

/* Floating windows */
.dialog {
  position: absolute;
  display: flex;
  flex-direction: column;
  border: 1px solid #8090b4;
  border-radius: 6px;
  background: #e9f0f7;
}

.dlg-title {
  display: flex;
  align-items: center;
  gap: 2px;
  flex: none;
  height: 26px;
  margin: 0;
  padding: 0 6px;
  border-radius: 5px 5px 0 0;
  background: linear-gradient(#9cacdc, #8698c4 50%, #788ab0);
  color: #fff;
  font-size: 12px;
  font-weight: normal;
}

.win-icon {
  width: 16px;
  height: 12px;
}

.filter {
  top: 226px;
  left: 438px;
  width: 595px;
  height: 300px;
}

.filter-btns {
  display: flex;
  gap: 1px;
  padding: 8px 0 21px 10px;
}

.change {
  width: 188px;
}

.names {
  width: 216px;
}

.range {
  display: flex;
  height: 22px;
  padding-left: 10px;
}

.range .lbl {
  margin: 0;
  height: 21px;
}

.range .field {
  width: 34px;
  height: 21px;
}

.range .to {
  width: 42px;
  margin-left: 99px;
}

.range .sap-btn {
  width: 21px;
}

.range .multi {
  width: 27px;
  margin-left: 99px;
}

.range .in {
  margin-left: 8px;
}

.multiple {
  top: 340px;
  left: 400px;
  width: 658px;
  height: 387px;
}

.multi-body {
  flex: 1;
  padding: 28px 17px 0 3px;
}

.multi-body .panel {
  height: 258px;
  padding: 18px 180px 0 4px;
}

.grid-frame {
  border: 1px solid #86a8cc;
  padding: 2px 1px 1px;
}

.values {
  border-collapse: collapse;
  table-layout: fixed;
  width: 53px;
}

.values th {
  height: 21px;
  padding: 0 2px;
  border-right: 1px solid #a8b0b8;
  background: linear-gradient(#e2e6ea, #ccd2d8);
  font-weight: normal;
  text-align: left;
}

.values th:first-child {
  width: 19px;
}

.values td {
  height: 21px;
  padding: 0;
  border-right: 1px solid #b4c2d2;
  border-bottom: 1px solid #b4c2d2;
}

.values tr:last-child td {
  height: 19px;
  border-bottom: 0;
}

.cell {
  width: 18px;
  height: 19px;
}

.scroll {
  display: flex;
  gap: 2px;
  height: 17px;
  margin-top: 1px;
}

.scroll button {
  width: 16px;
  background: #f2f6fa;
}

.scroll button svg {
  width: 5px;
  height: 9px;
  fill: #3c4c5c;
}

.track {
  flex: 1;
  background: #fafafa;
}

.thumb {
  display: flex;
  justify-content: center;
  align-items: center;
  width: 70px;
  height: 16px;
  margin-left: 1px;
  border: 1px solid #98a8b8;
  background: linear-gradient(#e4edf5, #c8d8e6);
}

.thumb::after {
  content: "";
  width: 9px;
  height: 5px;
  border: 1px dotted #8898a8;
  border-width: 1px 0;
}

.thumb.long {
  width: 128px;
}

.edge {
  display: flex;
  height: 14px;
}

.edge svg {
  width: 32px;
  height: 14px;
}

.low {
  width: 24px;
  border-bottom: 1px solid #a9b8c8;
}

.multiple .low {
  width: 230px;
}

.high {
  flex: 1;
  border-top: 1px solid #a9b8c8;
}

.dlg-foot {
  display: flex;
  justify-content: flex-end;
  gap: 2px;
  margin-top: -5px;
  padding: 0 7px 8px;
}

.define {
  top: 328px;
  left: 622px;
  width: 245px;
  height: 409px;
  border-color: #1c3870;
  box-shadow: 1px 2px 8px rgba(30, 36, 60, 0.7);
}

.define .dlg-title {
  background: linear-gradient(#4468bc, #30529c 50%, #1e3a78);
}

.dlg-close {
  display: flex;
  align-items: center;
  justify-content: center;
  width: 16px;
  height: 16px;
  margin-left: auto;
  border: 1px solid #1a326c;
  border-radius: 2px;
  background: #3a5cae;
}

.dlg-close svg {
  width: 9px;
  height: 9px;
}

.options {
  flex: none;
  display: flex;
  flex-direction: column;
  justify-content: space-between;
  height: 285px;
  margin: 8px 17px 0 3px;
  border: 1px solid #b4c4d4;
  background: #cbdbe9;
}

.options table {
  width: 100%;
  border-collapse: collapse;
  table-layout: fixed;
}

.options caption {
  height: 24px;
  padding: 5px 2px 0;
  text-align: left;
}

.options th,
.options td {
  height: 19px;
  padding: 0 2px;
  font-weight: normal;
  text-align: left;
  line-height: 16px;
}

.options th {
  background: linear-gradient(#e0e4e8, #ccd2d6);
}

.options .sel {
  width: 29px;
  padding: 0 0 0 1px;
  border-right: 1px solid #b4bcc4;
}

.picked td {
  border: 1px solid #cc7430;
  border-width: 1px 0;
  background: #fddc84;
}

.options .picked .sel {
  padding-left: 5px;
  background: #fff0a8;
}

.picked .icon {
  display: block;
  height: 14px;
}

.options .scroll {
  margin: 0 2px 2px 0;
}

.choice {
  display: flex;
  flex: 1;
  gap: 2px;
  padding: 1px 4px 0;
}

.choice .sap-btn {
  height: 20px;
  gap: 3px;
  padding: 0 9px 0 2px;
}

.choice .led {
  margin: 0;
}

.chosen {
  background: linear-gradient(#fcd878, #fdd05c);
}

.choice .exclude {
  gap: 1px;
  padding-left: 1px;
  border-color: #b0a888;
  background: #fff3c4;
  color: #96989a;
}

.sap-btn.delete {
  width: 98px;
  height: 20px;
  gap: 8px;
}
```
